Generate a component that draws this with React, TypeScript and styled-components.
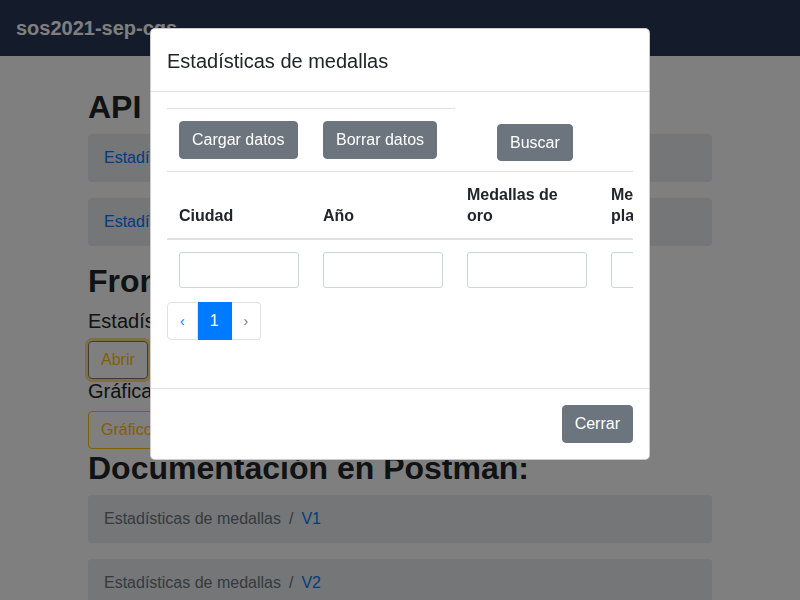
import React, { FC } from "react";
import styled, { createGlobalStyle, css } from "styled-components";

const COLORS = {
  dark: "#212529",
  navbar: "#283657",
  primary: "#007bff",
  secondary: "#6c757d",
  warning: "#ffc107",
  light: "#e9ecef",
  border: "#dee2e6",
  input: "#ced4da",
};

const GlobalStyle = createGlobalStyle`
  * { box-sizing: border-box; }
  html, body {
    margin: 0;
    padding: 0;
    height: 100%;
    overflow: hidden;
  }
  body {
    font-family: "Liberation Sans", Arial, sans-serif;
    font-size: 16px;
    line-height: 1.5;
    color: ${COLORS.dark};
    background: #fff;
  }
`;

/* ---------- page behind the modal ---------- */

const Navbar = styled.nav`
  height: 56px;
  padding: 0 16px;
  display: flex;
  align-items: center;
  background: ${COLORS.navbar};
`;

const Brand = styled.a`
  color: #fff;
  font-size: 20px;
  font-weight: 700;
  text-decoration: none;
`;

const Container = styled.main`
  width: 624px;
  margin: 0 auto;
  padding-top: 32px;
`;

const Heading = styled.h2`
  margin: 0 0 8px;
  font-size: 32px;
  font-weight: 700;
  line-height: 1.2;
`;

const SubHeading = styled.h5`
  margin: 0 0 8px;
  font-size: 20px;
  font-weight: 500;
  line-height: 1.2;
`;

const Breadcrumb = styled.ol`
  display: flex;
  list-style: none;
  margin: 0 0 16px;
  padding: 12px 16px;
  background: ${COLORS.light};
  border-radius: 4px;

  li + li::before {
    content: "/";
    padding: 0 8px;
    color: ${COLORS.secondary};
  }
`;

const Crumb = styled.li<{ $link?: boolean }>`
  color: ${(p) => (p.$link ? COLORS.primary : COLORS.secondary)};
`;

const OutlineButton = styled.button<{ $focus?: boolean }>`
  font: inherit;
  height: 38px;
  margin-bottom: 0;
  padding: 0 12px;
  color: ${COLORS.warning};
  background: transparent;
  border: 1px solid ${(p) => (p.$focus ? "#777" : COLORS.warning)};
  border-radius: 4px;
  ${(p) =>
    p.$focus &&
    css`
      box-shadow: 0 0 0 3px rgba(255, 193, 7, 0.5);
    `}
`;

const ButtonRow = styled.div`
  display: flex;
`;

/* ---------- modal ---------- */

const Backdrop = styled.div`
  position: fixed;
  inset: 0;
  background: rgba(0, 0, 0, 0.5);
  z-index: 1040;
`;

const ModalWrap = styled.div`
  position: fixed;
  inset: 0;
  z-index: 1050;
  overflow: hidden;
`;

const Dialog = styled.div`
  width: 500px;
  margin: 28px auto;
  background: #fff;
  border: 1px solid rgba(0, 0, 0, 0.2);
  border-radius: 5px;
`;

const ModalHeader = styled.div`
  padding: 16px;
  border-bottom: 1px solid ${COLORS.border};
`;

const ModalTitle = styled.h5`
  margin: 0;
  font-size: 20px;
  font-weight: 500;
  line-height: 30px;
  padding-top: 1px;
  height: 30px;
`;

const ModalBody = styled.div`
  padding: 16px 16px 32px;
`;

const ModalFooter = styled.div`
  display: flex;
  justify-content: flex-end;
  padding: 12px;
  border-top: 1px solid ${COLORS.border};
`;

const Button = styled.button`
  font: inherit;
  height: 38px;
  padding: 0 12px;
  color: #fff;
  background: ${COLORS.secondary};
  border: 1px solid ${COLORS.secondary};
  border-radius: 4px;
  cursor: pointer;
`;

const FooterButton = styled(Button)`
  margin: 4px;
`;

const Toolbar = styled.div`
  display: flex;
`;

const ActionTable = styled.table`
  width: 288px;
  border-collapse: collapse;
  table-layout: fixed;

  td {
    width: 144px;
    padding: 12px;
    border-top: 1px solid ${COLORS.border};
  }
`;

const SearchCell = styled.div`
  padding: 16px 0 0 42px;

  ${Button} {
    height: 37px;
  }
`;

const TableScroll = styled.div`
  width: 100%;
  overflow: hidden;
`;

const DataTable = styled.table`
  border-collapse: collapse;
  table-layout: fixed;
  width: ${144 * 6}px;

  th,
  td {
    width: 144px;
    padding: 12px;
    text-align: left;
    border-top: 1px solid ${COLORS.border};
  }

  th {
    vertical-align: bottom;
    font-weight: 700;
    line-height: 21px;
    border-bottom: 2px solid ${COLORS.border};
  }

  tbody td {
    border-top: none;
  }
`;

const Field = styled.input`
  display: block;
  width: 120px;
  height: 36px;
  padding: 0 8px;
  font: inherit;
  border: 1px solid ${COLORS.input};
  border-radius: 3px;
  background: #fff;
`;

const Pagination = styled.ul`
  display: flex;
  list-style: none;
  margin: 2px 0 16px;
  padding: 0;
`;

const PageLink = styled.li<{ $active?: boolean; $disabled?: boolean }>`
  height: 38px;
  padding: 0 12px;
  line-height: 36px;
  font-size: ${(p) => (p.$active ? "16px" : "14px")};
  border: 1px solid ${(p) => (p.$active ? COLORS.primary : COLORS.border)};
  border-left: none;
  color: ${(p) =>
    p.$active ? "#fff" : p.$disabled ? COLORS.secondary : COLORS.primary};
  background: ${(p) => (p.$active ? COLORS.primary : "#fff")};

  &:first-child {
    border-left: 1px solid ${COLORS.border};
    border-radius: 4px 0 0 4px;
  }
  &:last-child {
    border-radius: 0 4px 4px 0;
  }
`;

const columns = [
  "Ciudad",
  "Año",
  "Medallas de oro",
  "Medallas de plata",
  "Medallas de bronce",
  "Acciones",
];

const App: FC = () => {
  return (
    <>
      <GlobalStyle />
      <Navbar>
        <Brand href="#/">sos2021-sep-cgs</Brand>
      </Navbar>
      <Container>
        <Heading>API</Heading>
        <Breadcrumb>
          <Crumb $link>Estadísticas de medallas V1</Crumb>
        </Breadcrumb>
        <Breadcrumb>
          <Crumb $link>Estadísticas de medallas V2</Crumb>
        </Breadcrumb>
        <Heading>Front-end</Heading>
        <SubHeading>Estadísticas de medallas</SubHeading>
        <ButtonRow>
          <OutlineButton $focus>Abrir</OutlineButton>
        </ButtonRow>
        <SubHeading>Gráficas</SubHeading>
        <ButtonRow>
          <OutlineButton>Gráficos de medallas</OutlineButton>
        </ButtonRow>
        <Heading>Documentación en Postman:</Heading>
        <Breadcrumb>
          <Crumb>Estadísticas de medallas</Crumb>
          <Crumb $link>V1</Crumb>
        </Breadcrumb>
        <Breadcrumb>
          <Crumb>Estadísticas de medallas</Crumb>
          <Crumb $link>V2</Crumb>
        </Breadcrumb>
      </Container>

      <Backdrop />
      <ModalWrap>
        <Dialog>
          <ModalHeader>
            <ModalTitle>Estadísticas de medallas</ModalTitle>
          </ModalHeader>
          <ModalBody>
            <Toolbar>
              <ActionTable>
                <tbody>
                  <tr>
                    <td>
                      <Button>Cargar datos</Button>
                    </td>
                    <td>
                      <Button>Borrar datos</Button>
                    </td>
                  </tr>
                </tbody>
              </ActionTable>
              <SearchCell>
                <Button>Buscar</Button>
              </SearchCell>
            </Toolbar>
            <TableScroll>
              <DataTable>
                <thead>
                  <tr>
                    {columns.map((c) => (
                      <th key={c}>{c}</th>
                    ))}
                  </tr>
                </thead>
                <tbody>
                  <tr>
                    {columns.slice(0, 5).map((c) => (
                      <td key={c}>
                        <Field type="text" />
                      </td>
                    ))}
                    <td />
                  </tr>
                </tbody>
              </DataTable>
            </TableScroll>
            <Pagination>
              <PageLink>‹</PageLink>
              <PageLink $active>1</PageLink>
              <PageLink $disabled>›</PageLink>
            </Pagination>
          </ModalBody>
          <ModalFooter>
            <FooterButton>Cerrar</FooterButton>
          </ModalFooter>
        </Dialog>
      </ModalWrap>
    </>
  );
};

export default App;
